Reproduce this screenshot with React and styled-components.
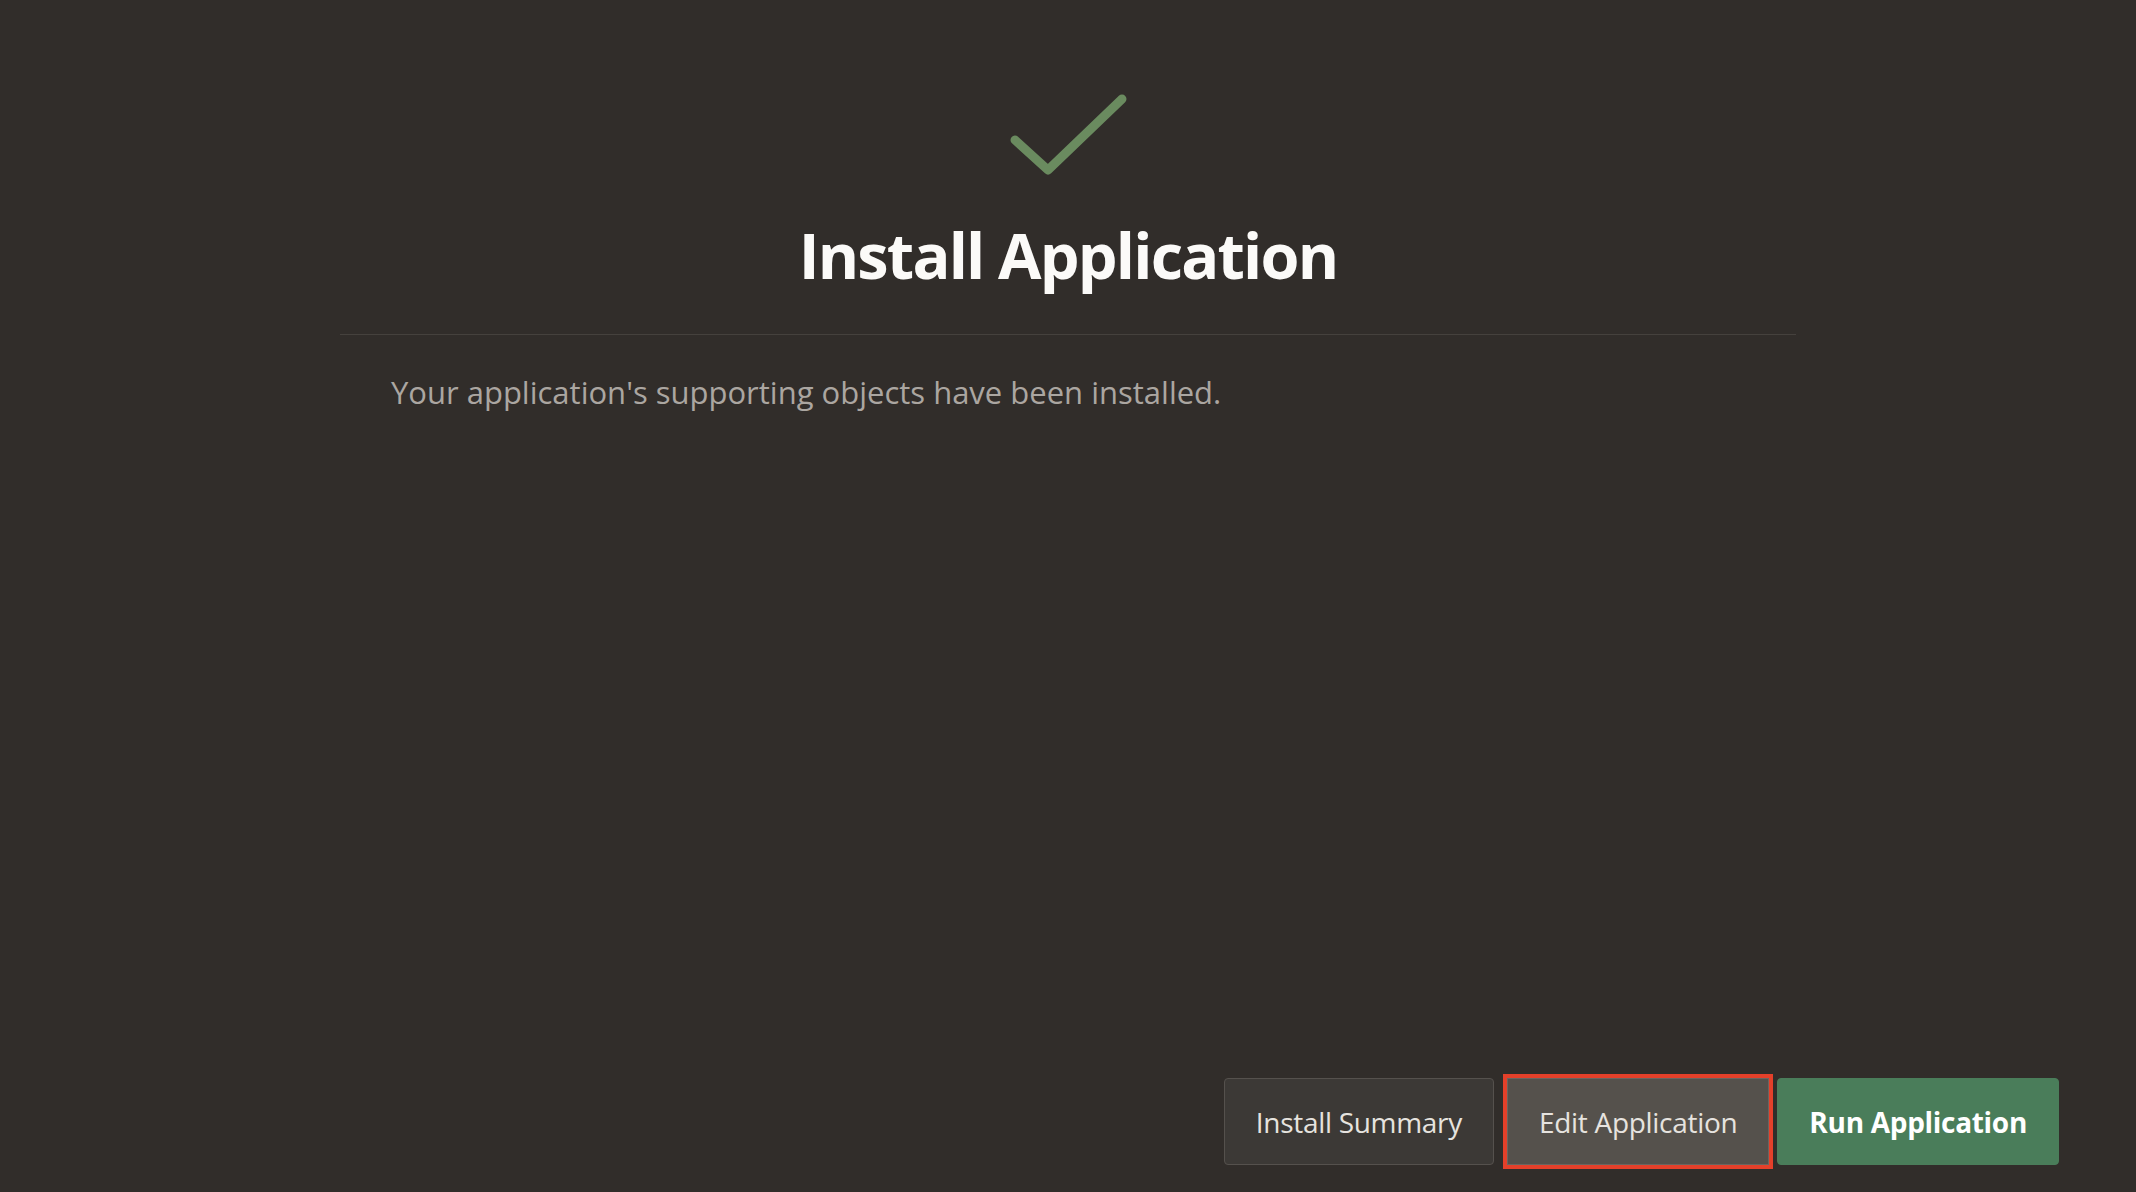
import { createGlobalStyle } from 'styled-components'
import styled from 'styled-components'

const Global = createGlobalStyle`
  html, body { margin:0; padding:0; background:#312d2a; }
  body { font-family:"Open Sans","Noto Sans",Arial,sans-serif; -webkit-font-smoothing:antialiased; }
  #root { min-height:100vh; }
`

const Page = styled.main`
  min-height:100vh; display:flex; flex-direction:column; align-items:center; box-sizing:border-box;
  background:#312d2a; color:#f5f3f0;
`
const Header = styled.header`
  width:1456px; display:flex; flex-direction:column; align-items:center;
  padding:89px 0 41px; border-bottom:1px solid #45413d;
`
const Check = styled.svg`width:127px; height:91px; display:block;`
const Title = styled.h1`
  margin:36px 0 0; font-size:63px; line-height:77px; font-weight:700; color:#fbfaf8; letter-spacing:-1.8px;
`
const Body = styled.section`width:1456px; box-sizing:border-box; padding:36px 51px 0; flex:1;`
const Message = styled.p`margin:0; font-size:31px; line-height:42px; color:#aba6a1;`

const Actions = styled.footer`
  align-self:stretch; display:flex; justify-content:flex-end; gap:8px; padding:0 77px 27px;
`
const Button = styled.button`
  height:87px; box-sizing:border-box; padding:0 31px; font-family:inherit; font-size:28px; letter-spacing:-0.3px;
  display:inline-flex; align-items:center; cursor:pointer;
  border-radius:${p => p.$variant === 'focus' ? '0' : '4px'};
  background:${p => p.$variant === 'primary' ? '#4a7d5a' : p.$variant === 'focus' ? '#55514c' : '#3c3936'};
  border:1px solid ${p => p.$variant === 'primary' ? '#4a7d5a' : p.$variant === 'focus' ? '#6a6661' : '#55514d'};
  color:${p => p.$variant === 'primary' ? '#ffffff' : '#e6e3df'};
  font-weight:${p => p.$variant === 'primary' ? 700 : 400};
  outline:${p => p.$variant === 'focus' ? '4px solid #e4402a' : 'none'};
  margin-left:${p => p.$variant === 'focus' ? '5px' : '0'};
`

export default function App(){
  return (
    <Page>
      <Global />
      <Header>
        <Check viewBox="0 0 127 91" aria-hidden>
          <polyline points="10,51 43,81 117,10" fill="none" stroke="#6a8b5f" strokeWidth="9" strokeLinecap="round" strokeLinejoin="round" />
        </Check>
        <Title>Install Application</Title>
      </Header>
      <Body>
        <Message>Your application's supporting objects have been installed.</Message>
      </Body>
      <Actions>
        <Button>Install Summary</Button>
        <Button $variant="focus">Edit Application</Button>
        <Button $variant="primary">Run Application</Button>
      </Actions>
    </Page>
  )
}
